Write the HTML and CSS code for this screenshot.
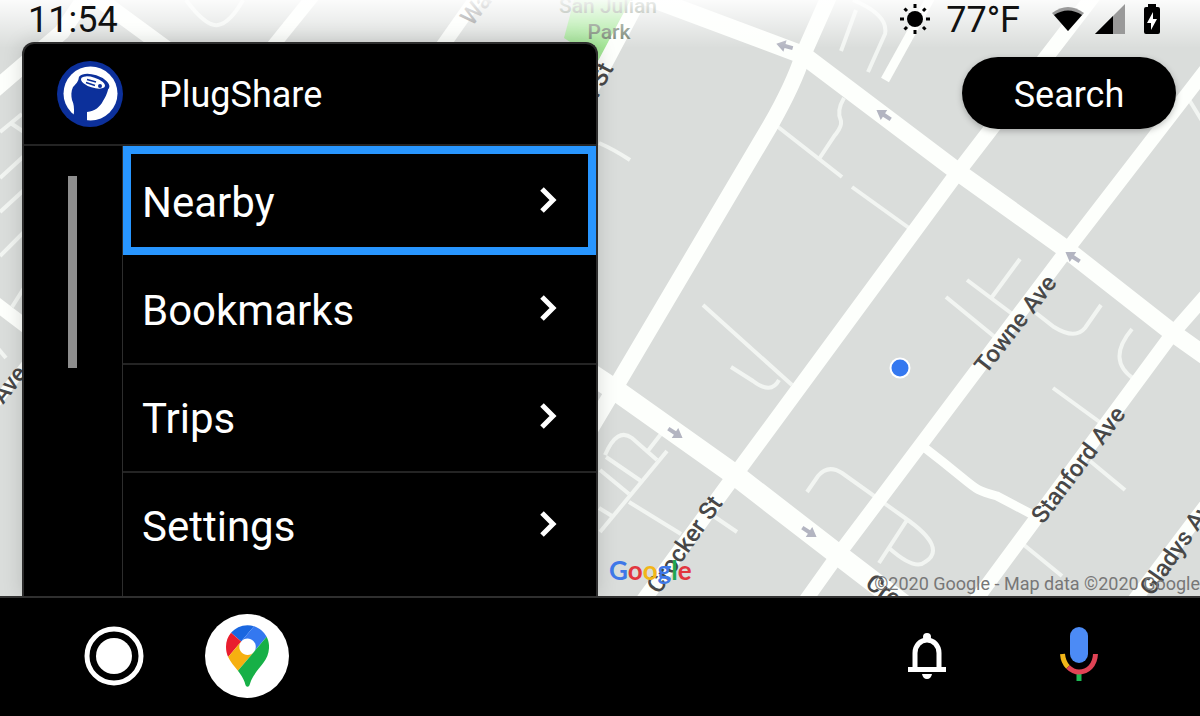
FILE: index.html
```
<!DOCTYPE html>
<html lang="en">
<head>
  <meta charset="UTF-8" />
  <meta name="viewport" content="width=device-width, initial-scale=1" />
  <title>PlugShare</title>
  <link rel="stylesheet" href="styles.css">
</head>
<body>

  <main class="screen">

    <svg class="map" viewBox="0 0 1200 596" preserveAspectRatio="xMidYMid slice" aria-hidden="true">
      <defs>
        <linearGradient id="fade" x1="0" y1="0" x2="0" y2="1">
          <stop offset="0" stop-color="#fff" stop-opacity="0.9" />
          <stop offset="1" stop-color="#fff" stop-opacity="0" />
        </linearGradient>
        <g id="oneway">
          <path d="M-9 0 0 -6V-2H8V2H0V6Z" fill="#b3b5c1" />
        </g>
      </defs>

      <rect width="1200" height="596" fill="#dadddb" />
      <path d="M574 0H640L601 62L564 38Z" fill="#a3e796" />

      <!-- alleys -->
      <g class="alley">
        <path d="M853 0Q889 15 885 34L868 72M856 10L841 51" />
        <path d="M844 98C838 108 838 115 841 121C842 127 838 131 835 135L819 159" />
        <path d="M773 123L842 177M852 187L909 228" />
        <path d="M599 143Q613 149 630 160" />
        <path d="M1020 259L992 297M967 280L1015 316M1036 313L1054 327Q1075 340 1085 328L1101 305" />
        <path d="M946 297L996 338M1132 329Q1106 360 1134 379" />
        <path d="M703 305L792 385M731 367L753 381Q771 395 779 380" />
        <path d="M807 492L818 476Q828 464 842 473L905 518Q948 548 925 562Q915 571 889 548M907 520L879 563" />
        <path d="M605 455Q617 427 632 438L657 460M661 434L647 452M606 457L641 481M600 470L629 494" />
        <path d="M667 451L600 532M629 502L681 534M712 515L737 532M599 508L612 516" />
        <path d="M1053 388L1101 423M1090 461L1125 490M1024 545L1062 576M1188 98L1204 124" />
        <path d="M186 0Q206 27 218 25T243 0" />
        <path d="M0 132L22 114M12 124L24 132M0 178L24 156M0 212L24 190M0 256L24 232M12 307L24 288M-4 346L6 358" />
      </g>

      <!-- streets -->
      <g class="street">
        <path d="M831 -8L803 55Q794 84 770 126L615 388L590 430" stroke-width="16" />
        <path d="M1094 -5L958 172L735 475L640 605" stroke-width="15" />
        <path d="M1215 58L1067 250L838 555L803 604" stroke-width="14" />
        <path d="M1215 285L1173 333L973 604" stroke-width="14" />
        <path d="M1225 480L1130 606" stroke-width="14" />
        <path d="M925 448C980 490 970 489 997 496L1035 516" stroke-width="9" />
        <path d="M640 -2L606 62L580 110" stroke-width="15" />
        <path d="M885 80L932 -5" stroke-width="9" />
        <path d="M482 -10L420 78" stroke-width="14" />
        <path d="M318 -10L260 62" stroke-width="13" />
        <path d="M-8 92L62 32L90 -10M92 -6L190 66" stroke-width="16" />
        <path d="M-5 303L28 328" stroke-width="14" />
        <path d="M-5 404L28 362" stroke-width="10" />
        <path d="M640 -6L803 55L958 172L1067 250L1173 333L1215 363" stroke-width="18" />
        <path d="M585 370L618 392L735 475L845 560L905 606" stroke-width="21" />
      </g>

      <use href="#oneway" transform="translate(785 46) rotate(15)" />
      <use href="#oneway" transform="translate(884 115) rotate(33)" />
      <use href="#oneway" transform="translate(1073 257) rotate(33)" />
      <use href="#oneway" transform="translate(675 433) rotate(213)" />
      <use href="#oneway" transform="translate(809 532) rotate(213)" />

      <!-- street names -->
      <g class="street-name">
        <text transform="translate(986 375) rotate(-52)">Towne Ave</text>
        <text transform="translate(1043 525) rotate(-53)">Stanford Ave</text>
        <text transform="translate(1152 597) rotate(-55)">Gladys Ave</text>
        <text transform="translate(659 595) rotate(-55)">Crocker St</text>
        <text transform="translate(579 134) rotate(-62)">Wall St</text>
        <text transform="translate(864 586) rotate(36)">Crocker</text>
        <text transform="translate(3 405) rotate(-52)">Ave</text>
        <text class="faded" transform="translate(472 27) rotate(-52)">Wall St</text>
      </g>
      <g class="park-name">
        <text x="608" y="13">San Julian</text>
        <text x="609" y="39">Park</text>
      </g>

      <circle cx="900" cy="368" r="10.500" fill="#fff" />
      <circle cx="900" cy="368" r="8.500" fill="#3478f0" />
      <rect width="1200" height="48" fill="url(#fade)" />
    </svg>

    <div class="overlay">
      <header class="status-bar">
        <time>11:54</time>
        <div class="status-right">
          <svg width="30" height="30" viewBox="0 0 30 30" aria-hidden="true">
            <circle cx="15" cy="15" r="8" />
            <path d="M15 0V4M15 26V30M0 15H4M26 15H30M4.500 4.500L7 7M23 23L25.500 25.500M4.500 25.500L7 23M23 7L25.500 4.500" stroke="#000" stroke-width="3" />
          </svg>
          <span class="temperature">77°F</span>
          <svg class="wifi" width="32" height="24" viewBox="0 0 32 24" aria-hidden="true">
            <path d="M0 6Q16 -6 32 6L16 24Z" fill="#999" />
            <path d="M2 8Q16 -1 30 8L16 24Z" />
          </svg>
          <svg class="signal" width="30" height="30" viewBox="0 0 30 30" aria-hidden="true">
            <path d="M0 30L30 0V30Z" fill="#999" />
            <path d="M0 30L18 12V30Z" />
          </svg>
          <svg width="16" height="30" viewBox="0 0 16 30" aria-hidden="true">
            <path d="M4 3V0H12V3H14Q16 3 16 5V28Q16 30 14 30H2Q0 30 0 28V5Q0 3 2 3Z" />
            <path d="M9 8L3 19H7V26L13 15H9Z" fill="#fff" />
          </svg>
        </div>
      </header>

      <div class="content">
        <section class="panel">
          <div class="panel-header">
            <svg width="66" height="66" viewBox="0 0 66 66" aria-hidden="true">
              <circle cx="33" cy="33" r="33" fill="#0c309b" />
              <circle cx="33.500" cy="32.500" r="27" fill="#fff" />
              <path d="M23 15C21 21 19 23 16 26C14 30 14 35 15 39C17 43 17 47 17 51L16 58L30 62V51C38 50 43 46 46 40C48 37 50 33 51.500 27Z" fill="#0c309b" />
              <ellipse cx="37" cy="21.500" rx="16" ry="7.500" transform="rotate(18 37 21.500)" fill="#0c309b" />
              <ellipse cx="36" cy="21.500" rx="12.500" ry="5" transform="rotate(18 36 21.500)" fill="#fff" />
              <path d="M30 18.500L39 21M29 21.500L38 24.500" stroke="#0c309b" stroke-width="1.500" />
              <circle cx="43" cy="25" r="2" fill="#0c309b" />
            </svg>
            <h1>PlugShare</h1>
          </div>
          <div class="panel-body">
            <div class="rail"><div class="scroll-thumb"></div></div>
            <nav class="menu">
              <button class="menu-item selected">Nearby
                <svg class="chevron" viewBox="0 0 18 28"><path d="M2 3L13 14L2 25" /></svg>
              </button>
              <button class="menu-item">Bookmarks
                <svg class="chevron" viewBox="0 0 18 28"><path d="M2 3L13 14L2 25" /></svg>
              </button>
              <button class="menu-item">Trips
                <svg class="chevron" viewBox="0 0 18 28"><path d="M2 3L13 14L2 25" /></svg>
              </button>
              <button class="menu-item">Settings
                <svg class="chevron" viewBox="0 0 18 28"><path d="M2 3L13 14L2 25" /></svg>
              </button>
            </nav>
          </div>
        </section>

        <div class="map-side">
          <button class="search-btn">Search</button>
          <div class="attribution">
            <span class="google-logo"><span class="g-blue">G</span><span class="g-red">o</span><span class="g-yellow">o</span><span class="g-blue">g</span><span class="g-green">l</span><span class="g-red">e</span></span>
            <small>©2020 Google - Map data ©2020 Google</small>
          </div>
        </div>
      </div>
    </div>
  </main>

  <footer class="nav-bar">
    <div class="nav-group nav-left">
      <button class="icon-btn" aria-label="Home">
        <svg width="60" height="60" viewBox="0 0 60 60">
          <circle cx="30" cy="30" r="27" fill="none" stroke="#fff" stroke-width="5" />
          <circle cx="30" cy="30" r="18" fill="#fff" />
        </svg>
      </button>
      <button class="icon-btn app-btn" aria-label="Maps">
        <svg width="43" height="62" viewBox="0 0 92.3 132.3">
          <path fill="#1a67e0" d="M60.200 2.200C55.800.8 51 0 46.100 0 32 0 19.300 6.400 10.800 16.500l21.800 18.300L60.200 2.200z" />
          <path fill="#e91d2e" d="M10.800 16.500C4.100 24.500 0 34.900 0 46.100c0 8.700 1.700 15.700 4.600 22l28-33.300-21.800-18.300z" />
          <path fill="#3478f0" d="M46.200 28.500c9.800 0 17.700 7.900 17.700 17.700 0 4.300-1.600 8.300-4.200 11.400 0 0 13.900-16.600 27.500-32.700-5.600-10.800-15.300-19-27-22.700L32.600 34.800c3.300-3.800 8.100-6.300 13.600-6.300" />
          <path fill="#f6b010" d="M46.200 63.800c-9.800 0-17.700-7.900-17.700-17.700 0-4.300 1.500-8.300 4.100-11.300l-28 33.300c4.800 10.600 12.800 19.200 21 29.900l34.100-40.500c-3.300 3.900-8.100 6.300-13.500 6.300" />
          <path fill="#17b047" d="M59.100 109.200c15.400-24.100 33.300-35 33.300-63 0-7.700-1.900-14.900-5.200-21.300L25.600 98c2.600 3.400 5.300 7.300 7.900 11.300 9.400 14.500 6.800 23.100 12.800 23.100s3.400-8.700 12.800-23.200" />
        </svg>
      </button>
    </div>
    <div class="nav-group nav-right">
      <button class="icon-btn" aria-label="Notifications">
        <svg width="40" height="46" viewBox="0 0 40 46">
          <circle cx="20" cy="4" r="4" fill="#fff" />
          <path d="M8 36V20A12 13 0 0 1 32 20V36" fill="none" stroke="#fff" stroke-width="5" />
          <path d="M1 34H39V39H1ZM15 41H25Q24 46 20 46T15 41Z" fill="#fff" />
        </svg>
      </button>
      <button class="icon-btn" aria-label="Voice search">
        <svg width="40" height="58" viewBox="0 0 40 58">
          <rect x="11" y="0" width="18" height="36" rx="9" fill="#4c8bf5" />
          <path d="M20 46V54" stroke="#1db954" stroke-width="5" />
          <path d="M3.500 27C4 33 5 36 9 40" fill="none" stroke="#f2b619" stroke-width="5" />
          <path d="M9 40Q14 45 20 45C29 45 36 38 36.500 27" fill="none" stroke="#e04355" stroke-width="5" />
        </svg>
      </button>
    </div>
  </footer>

</body>
</html>
```

FILE: styles.css
```
* {
  box-sizing: border-box;
}

body {
  margin: 0;
  height: 100vh;
  display: flex;
  flex-direction: column;
  background: #000;
  color: #fff;
  font-family: Roboto, "Liberation Sans", sans-serif;
  font-size: 36px;
  overflow: hidden;
}

button {
  border: none;
  background: none;
  color: inherit;
  font: inherit;
  padding: 0;
  cursor: pointer;
}

svg {
  display: block;
  flex: none;
}

/* Map and overlay share one grid cell */
.screen {
  flex: 1;
  min-height: 0;
  display: grid;
  grid-template: minmax(0, 1fr) / minmax(0, 1fr);
}

.map,
.overlay {
  grid-area: 1 / 1;
  width: 100%;
  height: 100%;
  min-height: 0;
}

.alley {
  fill: none;
  stroke: #f2f5f2;
  stroke-width: 4px;
}

.street {
  fill: none;
  stroke: #fdfffc;
}

.street-name {
  font-size: 24px;
  font-weight: 500;
  fill: #484848;
}

.street-name .faded {
  fill: #777;
}

.park-name {
  font-size: 21px;
  font-weight: 500;
  fill: #6b7a67;
  text-anchor: middle;
}

.overlay {
  display: flex;
  flex-direction: column;
  z-index: 1;
}

/* Status bar */
.status-bar {
  display: flex;
  justify-content: space-between;
  align-items: center;
  flex: none;
  height: 42px;
  padding: 0 40px 4px 28px;
  color: #111;
  line-height: 38px;
}

.status-bar time,
.temperature {
  padding-top: 2px;
}

.status-right {
  display: flex;
  align-items: center;
}

.temperature {
  margin: 0 32px 0 16px;
}

.signal {
  margin: 0 19px 0 11px;
}

.content {
  flex: 1;
  min-height: 0;
  display: flex;
}

/* Menu panel */
.panel {
  display: flex;
  flex-direction: column;
  width: 48%;
  margin-left: 22px;
  background: #000;
  border: 2px solid #2d2d2d;
  border-bottom: none;
  border-radius: 12px 12px 0 0;
  box-shadow: 0 0 20px rgba(0, 0, 0, 0.15);
  overflow: hidden;
}

.panel-header {
  display: flex;
  align-items: center;
  flex: none;
  gap: 36px;
  height: 102px;
  padding-left: 33px;
  border-bottom: 2px solid #242424;
}

.panel-header h1 {
  margin: 0;
  padding-top: 2px;
  font-size: 36px;
  font-weight: 400;
}

.panel-body {
  flex: 1;
  min-height: 0;
  display: flex;
}

.rail {
  width: 98px;
  padding: 30px 0 0 44px;
}

.scroll-thumb {
  width: 9px;
  height: 192px;
  background: #8e8e8e;
}

.menu {
  flex: 1;
  border-left: 1px solid #2d2d2d;
  overflow: hidden;
}

.menu-item {
  display: flex;
  align-items: center;
  justify-content: space-between;
  width: 100%;
  height: 108px;
  padding: 0 38px 0 19px;
  border-top: 2px solid #242424;
  font-size: 42px;
  text-align: left;
}

.menu-item.selected {
  height: 109px;
  padding: 4px 30px 0 11px;
  border: 8px solid #2896ff;
}

.selected + .menu-item {
  border-top-color: #000;
}

.chevron {
  width: 18px;
  height: 28px;
  margin-bottom: 5px;
  fill: none;
  stroke: #fff;
  stroke-width: 5px;
}

/* Map controls */
.map-side {
  flex: 1;
  min-width: 0;
  display: flex;
  flex-direction: column;
  justify-content: space-between;
}

.search-btn {
  align-self: flex-end;
  width: 214px;
  height: 72px;
  margin: 15px 24px 0 0;
  padding-top: 4px;
  border-radius: 36px;
  background: #000;
  box-shadow: 0 2px 6px rgba(0, 0, 0, 0.25);
}

.attribution {
  display: flex;
  justify-content: space-between;
  align-items: flex-end;
  padding-left: 11px;
  line-height: 24px;
  white-space: nowrap;
}

.attribution small {
  font-size: 18px;
  color: #777;
}

.google-logo {
  padding-bottom: 14px;
  font-family: Lato, sans-serif;
  font-size: 26px;
  font-weight: 700;
}

.g-blue { color: #3f78e8; }
.g-red { color: #e2363f; }
.g-yellow { color: #f2b619; }
.g-green { color: #1fa750; }

/* Bottom bar */
.nav-bar {
  display: flex;
  justify-content: space-between;
  flex: none;
  height: 120px;
  padding: 0 101px 2px 84px;
  border-top: 2px solid #333;
}

.nav-group {
  display: flex;
  align-items: center;
}

.nav-left {
  gap: 61px;
}

.nav-right {
  gap: 112px;
}

.app-btn {
  display: flex;
  align-items: center;
  justify-content: center;
  width: 84px;
  height: 84px;
  border-radius: 50%;
  background: #fff;
}
```
